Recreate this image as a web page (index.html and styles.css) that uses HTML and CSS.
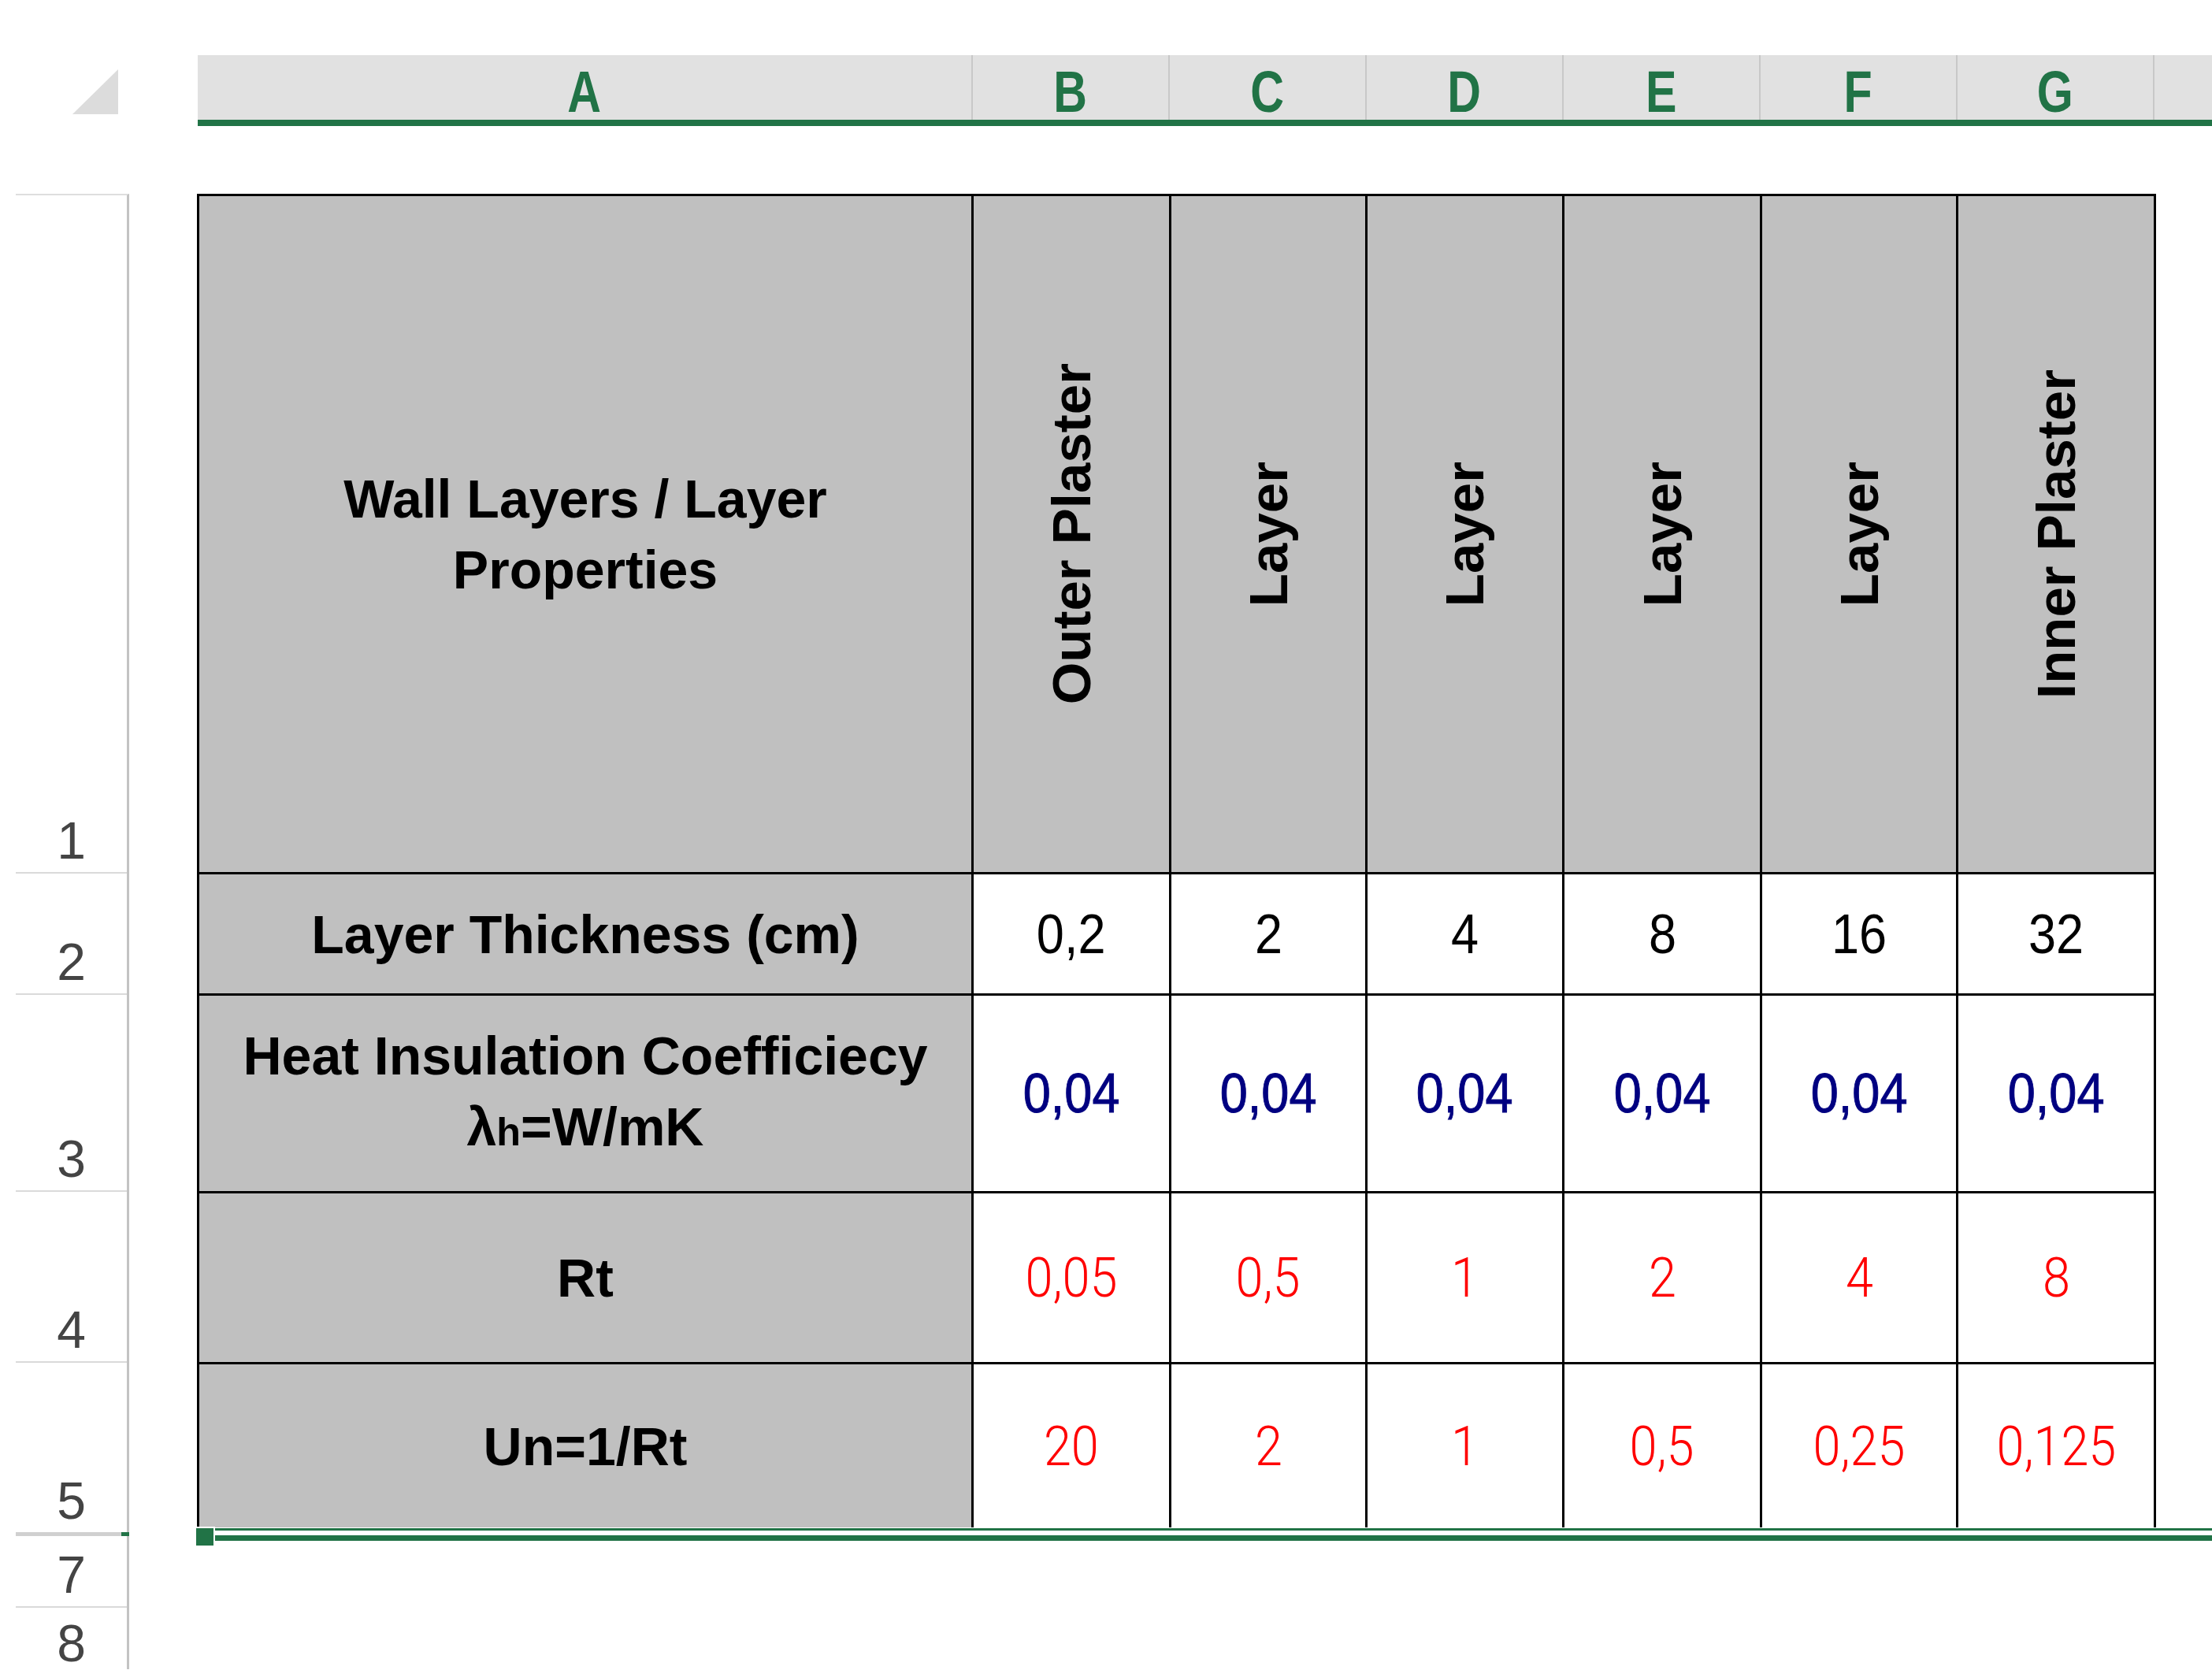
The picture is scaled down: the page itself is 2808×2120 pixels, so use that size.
FILE: index.html
```html
<!DOCTYPE html>
<html>
<head>
<meta charset="utf-8">
<title>Wall Layers</title>
<link rel="stylesheet" href="styles.css">
</head>
<body>
<div class="sheet">
  <div class="colbar">
    <div class="corner"><div class="tri"></div></div>
    <div class="colheads">
      <div class="ch a"><span>A</span></div>
      <div class="ch"><span>B</span></div>
      <div class="ch"><span>C</span></div>
      <div class="ch"><span>D</span></div>
      <div class="ch"><span>E</span></div>
      <div class="ch"><span>F</span></div>
      <div class="ch"><span>G</span></div>
      <div class="ch rest"></div>
    </div>
  </div>
  <div class="main">
    <div class="rowheads">
      <div class="rh h1">1</div>
      <div class="rh h2">2</div>
      <div class="rh h3">3</div>
      <div class="rh h4">4</div>
      <div class="rh h5">5</div>
      <div class="rh h7">7</div>
      <div class="rh h8">8</div>
    </div>
    <div class="tablewrap">
      <div class="tbl">
        <div class="c g"><div class="lbl">Wall Layers / Layer<br>Properties</div></div>
        <div class="c g"><span class="vt">Outer Plaster</span></div>
        <div class="c g"><span class="vt">Layer</span></div>
        <div class="c g"><span class="vt">Layer</span></div>
        <div class="c g"><span class="vt">Layer</span></div>
        <div class="c g"><span class="vt">Layer</span></div>
        <div class="c g"><span class="vt">Inner Plaster</span></div>

        <div class="c g"><div class="lbl">Layer Thickness (cm)</div></div>
        <div class="c"><span class="n blk">0,2</span></div>
        <div class="c"><span class="n blk">2</span></div>
        <div class="c"><span class="n blk">4</span></div>
        <div class="c"><span class="n blk">8</span></div>
        <div class="c"><span class="n blk">16</span></div>
        <div class="c"><span class="n blk">32</span></div>

        <div class="c g"><div class="lbl">Heat Insulation Coefficiecy<br>λ<span class="sub">h</span>=W/mK</div></div>
        <div class="c"><span class="n blu">0,04</span></div>
        <div class="c"><span class="n blu">0,04</span></div>
        <div class="c"><span class="n blu">0,04</span></div>
        <div class="c"><span class="n blu">0,04</span></div>
        <div class="c"><span class="n blu">0,04</span></div>
        <div class="c"><span class="n blu">0,04</span></div>

        <div class="c g"><div class="lbl">Rt</div></div>
        <div class="c"><span class="n red">0,05</span></div>
        <div class="c"><span class="n red">0,5</span></div>
        <div class="c"><span class="n red">1</span></div>
        <div class="c"><span class="n red">2</span></div>
        <div class="c"><span class="n red">4</span></div>
        <div class="c"><span class="n red">8</span></div>

        <div class="c g"><div class="lbl">Un=1/Rt</div></div>
        <div class="c"><span class="n red">20</span></div>
        <div class="c"><span class="n red">2</span></div>
        <div class="c"><span class="n red">1</span></div>
        <div class="c"><span class="n red">0,5</span></div>
        <div class="c"><span class="n red">0,25</span></div>
        <div class="c"><span class="n red">0,125</span></div>
      </div>
      <div class="selbar"><div class="thick"></div><span class="handle"></span></div>
    </div>
  </div>
</div>
</body>
</html>
```
FILE: styles.css
```css
* { box-sizing: border-box; }
html, body { margin: 0; padding: 0; background: #fff; }
body {
  font-family: "Liberation Sans", Arial, sans-serif;
  width: 2808px;
  height: 2120px;
  overflow: hidden;
}
.sheet { padding-top: 70px; }

/* column header bar */
.colbar { display: flex; height: 90px; }
.corner { width: 251px; flex: none; }
.tri {
  margin: 18px 0 0 92px;
  width: 58px;
  height: 57px;
  background: #dcdcdc;
  clip-path: polygon(100% 0, 100% 100%, 0 100%);
}
.colheads {
  flex: 1;
  display: flex;
  background: #e1e1e1;
  border-bottom: 8px solid #217346;
}
.ch {
  flex: none;
  width: 250px;
  border-right: 2px solid #c8c8c8;
  display: flex;
  align-items: center;
  justify-content: center;
  padding-top: 11px;
  color: #217346;
  font-weight: 700;
  font-size: 74px;
  line-height: 1;
}
.ch span { display: inline-block; transform: scaleX(0.8); }
.ch.a { width: 984px; }
.ch.rest { flex: 1; border-right: none; }

/* body */
.main { display: flex; align-items: flex-start; margin-top: 86px; }
.rowheads {
  flex: none;
  margin-left: 20px;
  width: 144px;
  border-right: 3px solid #c3c3c3;
  border-top: 2px solid #dedede;
}
.rh {
  display: flex;
  align-items: flex-end;
  justify-content: center;
  border-bottom: 2px solid #dadada;
  padding-bottom: 7px;
  font-size: 66px;
  line-height: 1;
  color: #444;
}
.h1 { height: 861px; }
.h2 { height: 154px; }
.h3 { height: 250px; }
.h4 { height: 217px; }
.h5 { height: 220px; border-bottom: 5px solid #d0d0d0; position: relative; }
.h5::after {
  content: "";
  position: absolute;
  right: -3px;
  bottom: -5px;
  width: 10px;
  height: 5px;
  background: #217346;
}
.h7 { height: 91px; }
.h8 { height: 78px; border-bottom: none; padding-bottom: 0; }

.tablewrap { flex: 1; margin-left: 86px; }
.tbl {
  display: grid;
  width: max-content;
  background: #000;
  padding: 3px 3px 0 3px;
  gap: 3px;
  grid-template-columns: 980px 248px 246px 247px 248px 246px 248px;
  grid-template-rows: 858px 151px 248px 214px 207px;
}
.c {
  background: #fff;
  display: flex;
  align-items: center;
  justify-content: center;
  text-align: center;
}
.g { background: #c0c0c0; }
.lbl {
  font-weight: 700;
  font-size: 68px;
  line-height: 90px;
  color: #000;
  white-space: nowrap;
}
.sub { font-size: 0.74em; }
.vt {
  writing-mode: vertical-rl;
  transform: rotate(180deg);
  font-weight: 700;
  font-size: 69px;
  line-height: 1;
  white-space: nowrap;
  color: #000;
}
.n {
  display: inline-block;
  font-size: 70px;
  line-height: 1;
  transform: scaleX(0.9);
}
.blk { color: #000; }
.blu { color: #000080; -webkit-text-stroke: 1px #000080; }
.red {
  color: #ff0000;
  font-family: Roboto, "Liberation Sans", sans-serif;
  font-weight: 300;
}

/* selection bar under the table */
.selbar {
  position: relative;
  margin-top: 1px;
  border-top: 3px solid #217346;
}
.selbar .thick { margin-top: 6px; height: 7px; background: #217346; }
.handle {
  position: absolute;
  left: -3px;
  top: -5px;
  width: 26px;
  height: 26px;
  border: 2px solid #fff;
  background: #217346;
}
```
